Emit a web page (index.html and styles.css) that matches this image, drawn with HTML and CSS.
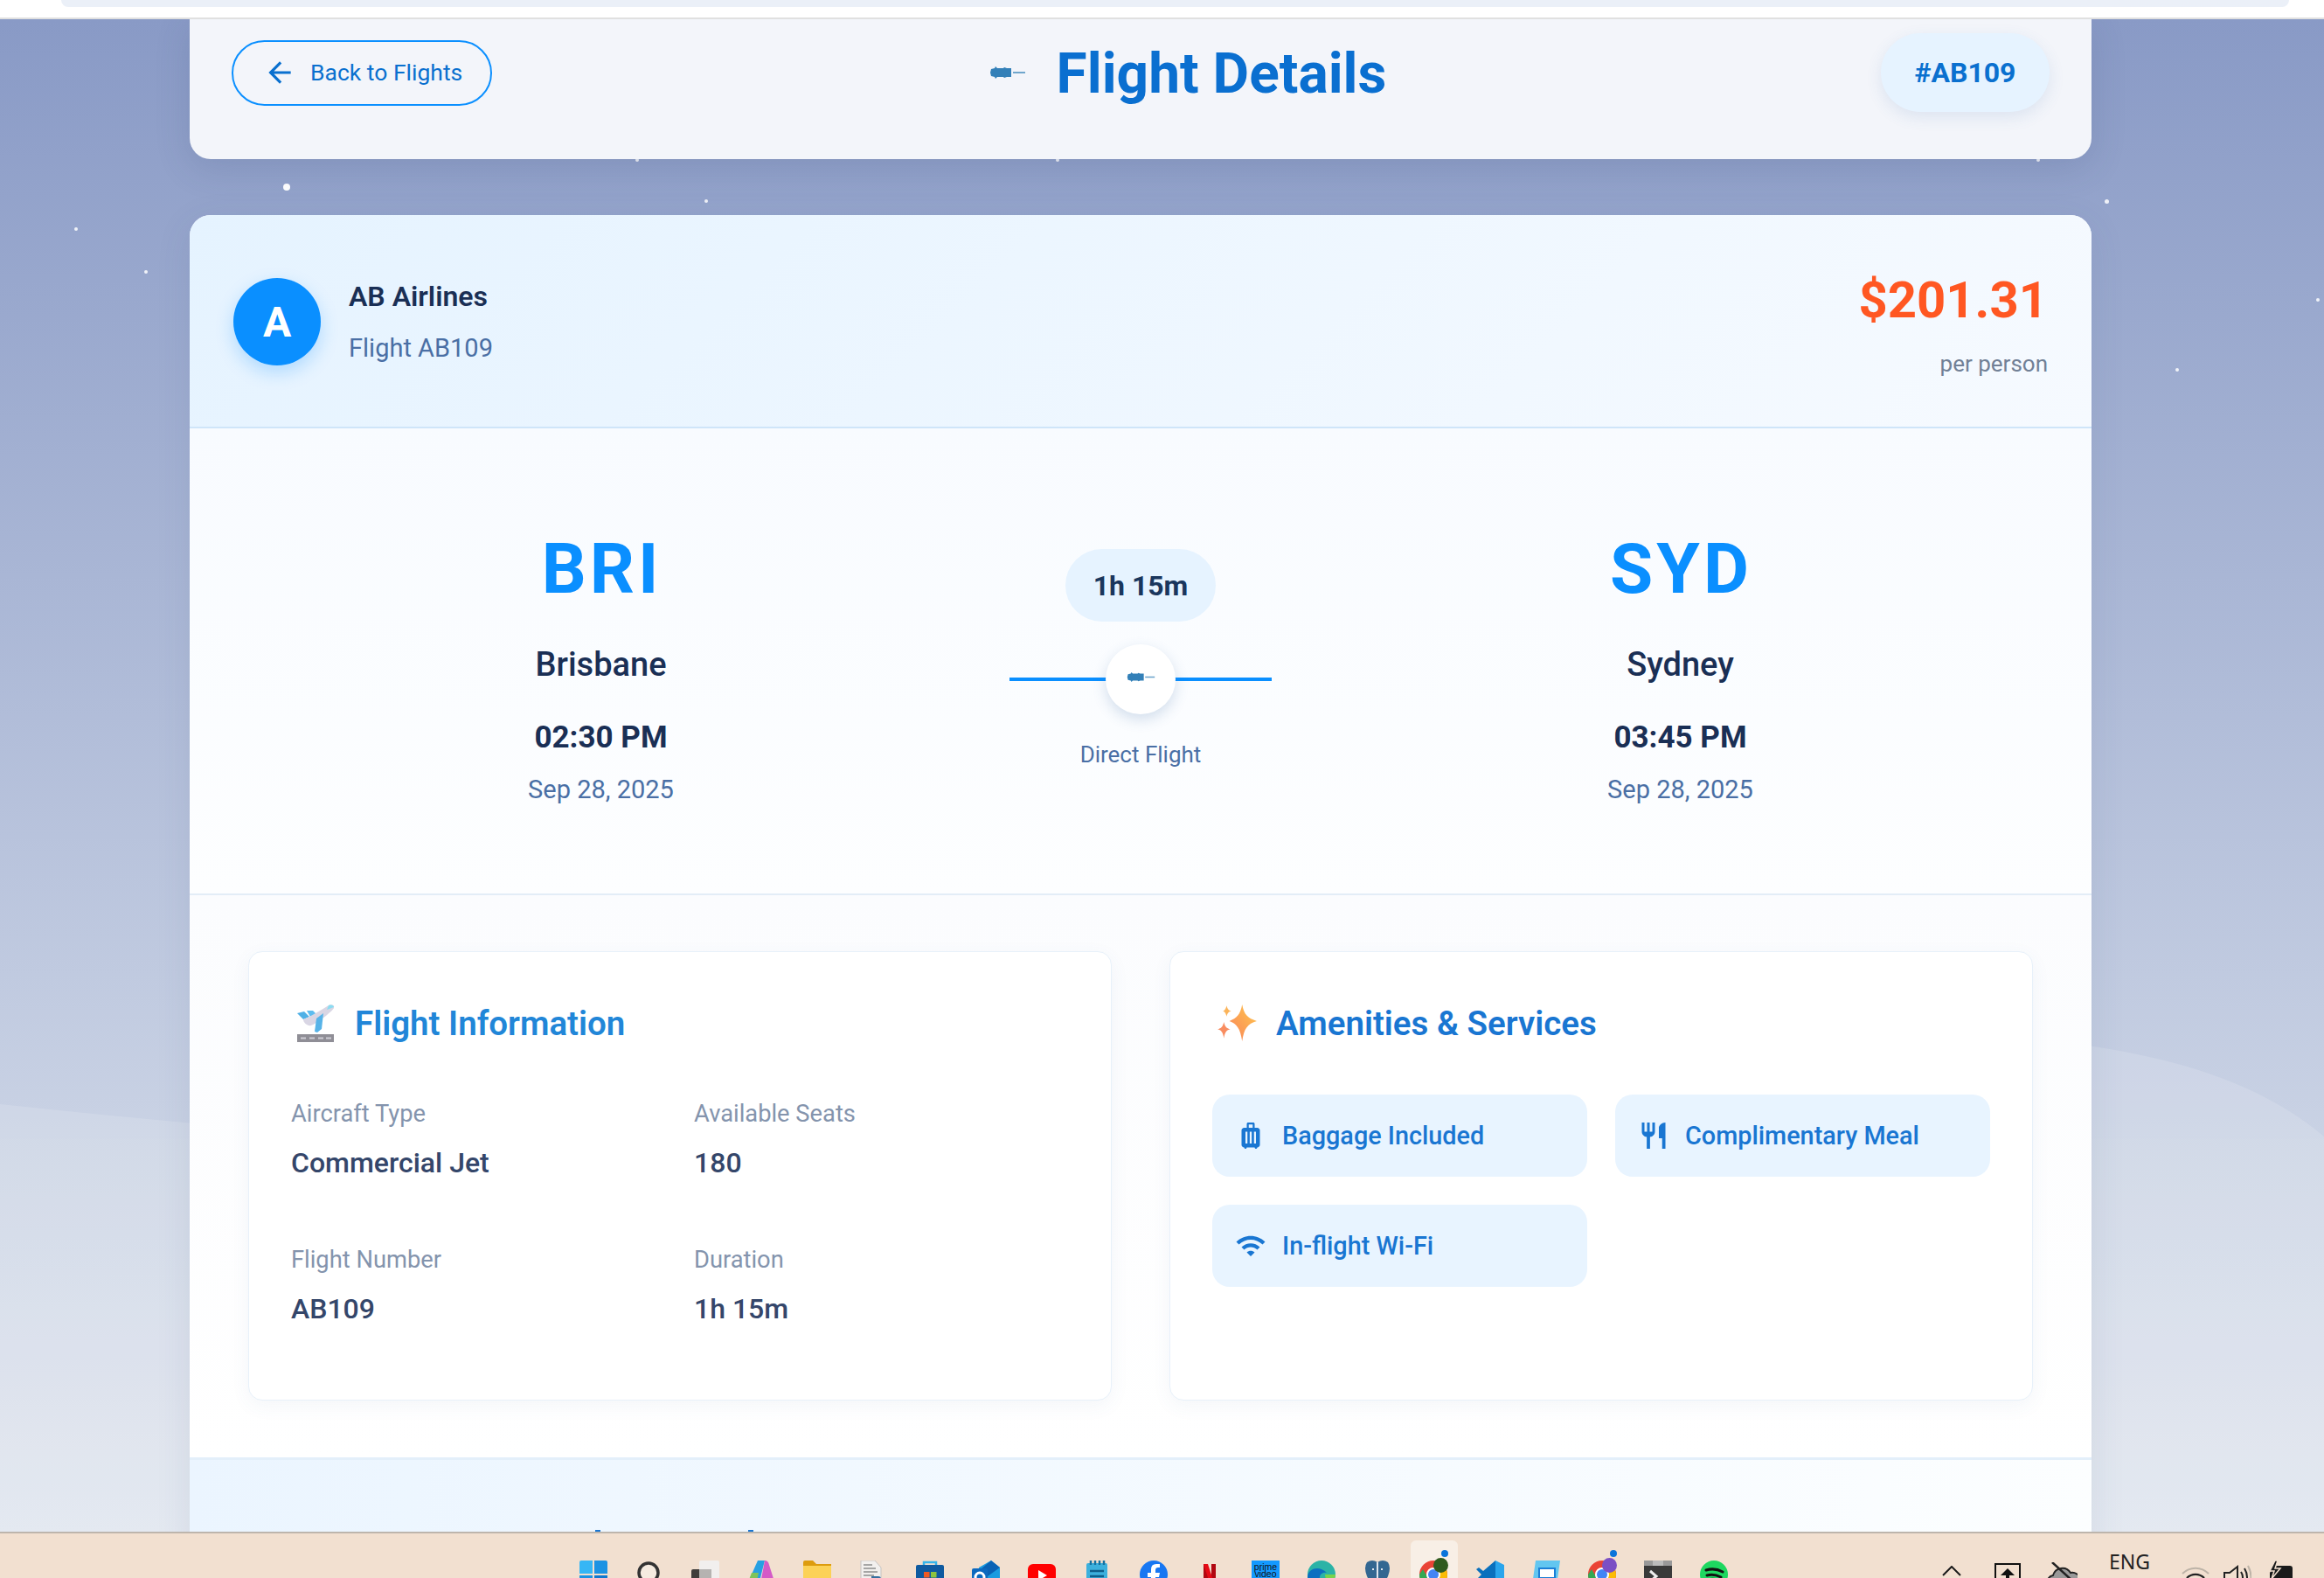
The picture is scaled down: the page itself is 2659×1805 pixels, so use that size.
FILE: index.html
```html
<!DOCTYPE html>
<html lang="en">
<head>
<meta charset="utf-8">
<title>Flight Details</title>
<link rel="stylesheet" href="styles.css">
</head>
<body>
<div class="browser-bar"><div class="browser-pill"></div></div>
<main class="page">
  <svg class="waves" viewBox="0 0 2659 1805" preserveAspectRatio="none" aria-hidden="true">
    <path class="wave-a" d="M0 1263C300 1295 600 1320 1000 1310C1500 1290 1900 1140 2300 1185C2450 1200 2570 1225 2659 1300V1805H0Z"/>
    <rect class="wave-b" x="0" y="1303" width="2659" height="502"/>
  </svg>
  <span class="star star-1"></span><span class="star star-2"></span><span class="star star-3"></span><span class="star star-4"></span><span class="star star-5"></span><span class="star star-6"></span><span class="star star-7"></span>
  <span class="star star-8"></span><span class="star star-9"></span><span class="star star-10"></span>

  <div class="column">
    <header class="top-card">
      <a class="back-btn" href="#">
        <svg class="back-icon" viewBox="0 0 24 24"><path d="M20 11H7.83l5.59-5.59L12 4l-8 8 8 8 1.41-1.41L7.83 13H20v-2z"/></svg>
        <span class="back-label">Back to Flights</span>
      </a>
      <div class="title-group">
        <svg class="mini-plane" viewBox="0 0 40 14"><path d="M0 7 1 3 5 2 6 0 8 2h7l1-1 3 1h5v10h-5l-3 1-1-1H8l-2 2-1-2-4-1Z"/><rect class="mini-tail" x="26" y="6" width="14" height="2"/></svg>
        <h1 class="page-title">Flight Details</h1>
      </div>
      <div class="code-badge">#AB109</div>
    </header>

    <section class="main-card">
      <div class="airline-row">
        <div class="airline">
          <div class="avatar">A</div>
          <div class="airline-text">
            <div class="airline-name">AB Airlines</div>
            <div class="airline-flight">Flight AB109</div>
          </div>
        </div>
        <div class="price-box">
          <div class="price">$201.31</div>
          <div class="per-person">per person</div>
        </div>
      </div>

      <div class="route">
        <div class="stop">
          <div class="stop-code">BRI</div>
          <div class="stop-city">Brisbane</div>
          <div class="stop-time">02:30 PM</div>
          <div class="stop-date">Sep 28, 2025</div>
        </div>
        <div class="route-mid">
          <div class="duration-pill">1h 15m</div>
          <div class="route-line">
            <div class="route-dot">
              <svg class="mini-plane mini-plane-small" viewBox="0 0 40 14"><path d="M0 7 1 3 5 2 6 0 8 2h7l1-1 3 1h5v10h-5l-3 1-1-1H8l-2 2-1-2-4-1Z"/><rect class="mini-tail" x="26" y="6" width="14" height="2"/></svg>
            </div>
          </div>
          <div class="route-note">Direct Flight</div>
        </div>
        <div class="stop">
          <div class="stop-code">SYD</div>
          <div class="stop-city">Sydney</div>
          <div class="stop-time">03:45 PM</div>
          <div class="stop-date">Sep 28, 2025</div>
        </div>
      </div>

      <div class="info">
        <article class="panel">
          <h2 class="panel-title panel-title-light">
            <svg class="emoji emoji-plane" viewBox="0 0 44 44">
              <rect x="0" y="35" width="42" height="9" fill="#8f8e96"/>
              <path d="M4 39.5h6M14 39.5h6M24 39.5h6M33 39.5h6" stroke="#cfcdd6" stroke-width="2"/>
              <path d="M0 11l8-2 6 6-7 3z" fill="#4fb0e6"/>
              <path d="M11 8l7 0 5 5-8 2z" fill="#5dbcef"/>
              <path d="M7 18C15 15 28 7 36 2c4-2 7 0 6 3-1 3-18 17-26 20-4 1-9-3-9-7z" fill="#d9d6e4"/>
              <path d="M36 2c3-1 6 0 6 2l-8 3z" fill="#8bdcf2"/>
              <path d="M22 17l8-6-2 18-5 4-3-1z" fill="#57b3e8"/>
            </svg>
            <span>Flight Information</span>
          </h2>
          <div class="facts">
            <div class="fact"><div class="fact-label">Aircraft Type</div><div class="fact-value">Commercial Jet</div></div>
            <div class="fact"><div class="fact-label">Available Seats</div><div class="fact-value">180</div></div>
            <div class="fact"><div class="fact-label">Flight Number</div><div class="fact-value">AB109</div></div>
            <div class="fact"><div class="fact-label">Duration</div><div class="fact-value">1h 15m</div></div>
          </div>
        </article>

        <article class="panel">
          <h2 class="panel-title">
            <svg class="emoji emoji-spark" viewBox="0 0 44 44">
              <defs><linearGradient id="spark" x1="1" y1="0" x2="0" y2="1"><stop offset="0" stop-color="#ffc84d"/><stop offset="1" stop-color="#f9825a"/></linearGradient></defs>
              <path d="M27 2c2 11 6 15 16 18-10 3-14 8-16 22-2-14-6-19-14-22 8-3 12-7 14-18z" fill="url(#spark)"/>
              <path d="M10 3c1 4 2 5 5 6-3 1-4 2-5 6-1-4-2-5-4-6 2-1 3-2 4-6z" fill="#fbb45a"/>
              <path d="M7 21c1 5 3 7 7 8-4 1-6 3-7 10-1-7-3-9-7-10 4-1 6-3 7-8z" fill="#f98d60"/>
            </svg>
            <span>Amenities &amp; Services</span>
          </h2>
          <div class="amenities">
            <div class="amenity">
              <svg class="amenity-icon" viewBox="0 0 24 24"><path d="M17 6h-2V3c0-.55-.45-1-1-1h-4c-.55 0-1 .45-1 1v3H7c-1.1 0-2 .9-2 2v11c0 1.1.9 2 2 2 0 .55.45 1 1 1s1-.45 1-1h6c0 .55.45 1 1 1s1-.45 1-1c1.1 0 2-.9 2-2V8c0-1.1-.9-2-2-2zM9.5 18H8V9h1.5v9zm3.25 0h-1.5V9h1.5v9zm.75-12h-3V3.5h3V6zM16 18h-1.5V9H16v9z"/></svg>
              <span>Baggage Included</span>
            </div>
            <div class="amenity">
              <svg class="amenity-icon" viewBox="0 0 24 24"><path d="M11 9H9V2H7v7H5V2H3v7c0 2.12 1.66 3.84 3.75 3.97V22h2.5v-9.03C11.34 12.84 13 11.12 13 9V2h-2v7zm5-3v8h2.5v8H21V2c-2.76 0-5 2.24-5 4z"/></svg>
              <span>Complimentary Meal</span>
            </div>
            <div class="amenity">
              <svg class="amenity-icon" viewBox="0 0 24 24"><path d="M1 9l2 2c4.97-4.97 13.03-4.97 18 0l2-2C16.93 2.93 7.08 2.93 1 9zm8 8l3 3 3-3c-1.65-1.66-4.34-1.66-6 0zm-4-4l2 2c2.76-2.76 7.24-2.76 10 0l2-2C15.14 9.14 8.87 9.14 5 13z"/></svg>
              <span>In-flight Wi-Fi</span>
            </div>
          </div>
        </article>
      </div>

      <div class="next-section"><i class="next-tip next-tip-a"></i><i class="next-tip next-tip-b"></i></div>
    </section>
  </div>
</main>

<footer class="taskbar">
  <div class="task-apps">
    <div class="task-slot"><svg viewBox="0 0 32 32"><path fill="#36b6f5" d="M0 2q0-2 2-2h13v15H0z"/><path fill="#1c93e3" d="M17 0h13q2 0 2 2v13H17z"/><path fill="#1c93e3" d="M0 17h15v15H2q-2 0-2-2z"/><path fill="#0f78cf" d="M17 17h15v13q0 2-2 2H17z"/></svg></div>
    <div class="task-slot"><svg viewBox="0 0 32 32"><circle cx="15" cy="14" r="11" fill="#f5ebe0" stroke="#333" stroke-width="3.5"/><path d="M23 22l7 8" stroke="#333" stroke-width="4"/></svg></div>
    <div class="task-slot"><svg viewBox="0 0 32 32"><rect x="9" y="0" width="23" height="32" rx="2" fill="#f1efee"/><rect x="0" y="10" width="23" height="22" rx="2" fill="#3f3d3b"/><rect x="9" y="10" width="14" height="22" fill="#b5b3b1"/></svg></div>
    <div class="task-slot"><svg viewBox="0 0 32 32"><path fill="#27a0e2" d="M12 0h8l-8 32H2q-3-1-2-5z"/><path fill="#7ec45a" d="M5 14h8l-4 18H2q-3-1-2-5z"/><path fill="#d45bc7" d="M20 0q4 0 5 5l7 22q1 5-3 5H14z"/><path fill="#f1a33c" d="M9 26h9l-2 6H7z"/></svg></div>
    <div class="task-slot"><svg viewBox="0 0 32 32"><path fill="#dd9c0e" d="M0 2q0-2 2-2h9l4 4h17v6H0z"/><path fill="#fcd257" d="M0 6h32v24q0 2-2 2H2q-2 0-2-2z"/></svg></div>
    <div class="task-slot"><svg viewBox="0 0 32 32"><path fill="#f2f0ee" stroke="#c5c3c1" d="M1 0h16l7 8v24H1z"/><path d="M4 5h10M4 9h14M4 13h16M4 17h12" stroke="#8d8d8d" stroke-width="1.5"/><path fill="#356f9f" d="M13 18h8q3 0 3 3v3h-8v8h-3z"/><path fill="#fdd23c" d="M25 22h5v10H17v-4h8z"/></svg></div>
    <div class="task-slot"><svg viewBox="0 0 32 32"><path d="M9 6V2h14v4" fill="none" stroke="#34b4ea" stroke-width="2.5"/><rect y="5" width="32" height="27" rx="2" fill="#0e5aa0"/><rect x="9" y="13" width="6.5" height="6.5" fill="#ef5a24"/><rect x="17" y="13" width="6.5" height="6.5" fill="#8cc43f"/><rect x="9" y="21" width="6.5" height="6.5" fill="#2ea6e8"/><rect x="17" y="21" width="6.5" height="6.5" fill="#fdb913"/></svg></div>
    <div class="task-slot"><svg viewBox="0 0 32 32"><path fill="#1a9be0" d="M8 8 22 0l10 8v24H8z"/><path fill="#0a62b5" d="M22 0l10 8-14 10-8-8z"/><rect y="9" width="18" height="20" rx="2" fill="#0d69bf"/><circle cx="9" cy="19" r="5" fill="none" stroke="#fff" stroke-width="3"/></svg></div>
    <div class="task-slot"><svg viewBox="0 0 32 32"><rect y="4" width="32" height="28" rx="6" fill="#f00"/><path d="M12 11l10 6-10 6z" fill="#fff"/></svg></div>
    <div class="task-slot"><svg viewBox="0 0 32 32"><rect x="3" y="3" width="24" height="29" rx="2" fill="#3cb0dd"/><path d="M8 0v5M13 0v5M18 0v5M23 0v5" stroke="#1570a0" stroke-width="2.5"/><path d="M7 12h16M7 18h16M7 24h16" stroke="#0e5e8a" stroke-width="2.5"/></svg></div>
    <div class="task-slot"><svg viewBox="0 0 32 32"><circle cx="16" cy="16" r="16" fill="#1877f2"/><path fill="#fff" d="M18 32V19h4l1-5h-5v-3q0-3 3-3h2V4h-4q-6 0-6 6v4H9v5h4v13z"/></svg></div>
    <div class="task-slot"><svg viewBox="0 0 32 32"><path fill="#b20710" d="M9 4h5v28H9zM18 4h5v28h-5z"/><path fill="#e50914" d="M9 4h5l9 28h-5z"/></svg></div>
    <div class="task-slot"><svg viewBox="0 0 32 32"><rect width="32" height="32" fill="#1399ff"/><text class="prime-text" x="16" y="10.5">prime</text><text class="prime-text" x="16" y="19">video</text></svg></div>
    <div class="task-slot"><svg viewBox="0 0 32 32"><circle cx="16" cy="16" r="16" fill="#2bb3a6"/><path fill="#0c6fc0" d="M0 18C2 8 14 6 22 14c-5-1-9 2-8 8 1 5 5 9 10 9-12 3-24-2-24-13z"/><path fill="#77d44d" d="M26 26q6-6 6-10H20q0 6 6 10z"/></svg></div>
    <div class="task-slot"><svg viewBox="0 0 32 32"><path fill="#336791" d="M4 2q6-4 12 0 6-4 12 0 4 6 0 16l-3 6-5 2v6h-8v-6l-5-2-3-6Q0 8 4 2z"/><path d="M16 2v18M10 10h2M20 10h2" stroke="#dfe6ee" stroke-width="2"/></svg></div>
    <div class="task-slot task-slot-active"><svg class="chrome" viewBox="0 0 32 32"><circle cx="16" cy="16" r="16" fill="#ea4335"/><path fill="#34a853" d="M0 16a16 16 0 0 0 15 16l7-12-12 0-6-10z"/><path fill="#fbbc05" d="M32 16A16 16 0 0 1 15 32l7-12V10h9z"/><circle cx="16" cy="16" r="7" fill="#4285f4" stroke="#fff" stroke-width="2"/></svg><i class="chrome-badge chrome-badge-n"></i><i class="chrome-dot"></i></div>
    <div class="task-slot"><svg viewBox="0 0 32 32"><path fill="#2aa5ec" d="M22 0l10 5v22l-10 5z"/><path fill="#0a70bd" d="M22 0v32L8 20l-5 4-3-2 6-6-6-6 3-2 5 4z"/></svg></div>
    <div class="task-slot"><svg viewBox="0 0 32 32"><path fill="#62c6f0" d="M4 0h28l-4 28H0z"/><rect x="8" y="9" width="18" height="11" fill="#fff" stroke="#1b7fd6" stroke-width="2"/></svg></div>
    <div class="task-slot"><svg class="chrome" viewBox="0 0 32 32"><circle cx="16" cy="16" r="16" fill="#ea4335"/><path fill="#34a853" d="M0 16a16 16 0 0 0 15 16l7-12-12 0-6-10z"/><path fill="#fbbc05" d="M32 16A16 16 0 0 1 15 32l7-12V10h9z"/><circle cx="16" cy="16" r="7" fill="#4285f4" stroke="#fff" stroke-width="2"/></svg><i class="chrome-badge chrome-badge-t"></i><i class="chrome-dot"></i></div>
    <div class="task-slot"><svg viewBox="0 0 32 32"><rect width="32" height="32" rx="2" fill="#3a3a3a"/><rect width="32" height="6" fill="#999"/><rect x="10" width="12" height="6" fill="#bbb"/><path d="M7 12l7 6-7 6" fill="none" stroke="#eee" stroke-width="3"/></svg></div>
    <div class="task-slot"><svg viewBox="0 0 32 32"><circle cx="16" cy="16" r="16" fill="#1ed760"/><path d="M7 11q10-3 19 2M8 17q8-2 16 2M9 22q7-2 13 1" fill="none" stroke="#111" stroke-width="3" stroke-linecap="round"/></svg></div>
  </div>
  <div class="tray">
    <svg class="tray-icon tray-chevron" viewBox="0 0 22 12"><path d="M1 11 11 1l10 10" fill="none" stroke="#1a1a1a" stroke-width="2"/></svg>
    <svg class="tray-icon tray-box" viewBox="0 0 30 30"><rect x="1" y="1" width="28" height="28" fill="none" stroke="#111" stroke-width="2"/><path d="M15 6l8 8h-6v10h-4V14H7z" fill="#111"/></svg>
    <svg class="tray-icon tray-cloud" viewBox="0 0 34 30"><path d="M4 30a8 8 0 0 1 2-15 11 11 0 0 1 20-3 8 8 0 0 1 4 18z" fill="#999" stroke="#222" stroke-width="2"/><path d="M5 0l24 22" stroke="#222" stroke-width="2.5"/></svg>
    <div class="tray-lang">ENG</div>
    <svg class="tray-icon tray-wifi" viewBox="0 0 32 30"><path d="M1 11a21 21 0 0 1 30 0" fill="none" stroke="#bdb3a7" stroke-width="2"/><path d="M6 16a14 14 0 0 1 20 0M11 21a7 7 0 0 1 10 0" fill="none" stroke="#222" stroke-width="2.2"/></svg>
    <svg class="tray-icon tray-sound" viewBox="0 0 32 30"><path d="M1 10h6l9-7v24l-9-7H1z" fill="none" stroke="#222" stroke-width="2"/><path d="M20 9q4 6 0 12M24 5q6 10 0 20" fill="none" stroke="#222" stroke-width="2"/><path d="M28 2q7 13 0 26" fill="none" stroke="#bdb3a7" stroke-width="2"/></svg>
    <svg class="tray-icon tray-battery" viewBox="0 0 32 30"><path d="M9 6h18a3 3 0 0 1 3 3v21H4V14z" fill="#1a1a1a"/><path d="M10 0 4 12h5l-3 9 10-12h-6l3-9z" fill="#1a1a1a" stroke="#f2e0d0" stroke-width="1.5"/></svg>
  </div>
</footer>
</body>
</html>
```

FILE: styles.css
```css
* { box-sizing: border-box; }

html, body {
  margin: 0;
  height: 100%;
  overflow: hidden;
}

body {
  display: flex;
  flex-direction: column;
  font-family: Roboto, "Liberation Sans", sans-serif;
  color: #1a365d;
  background: #dfe6ef;
}

/* browser chrome strip */
.browser-bar {
  flex: 0 0 22px;
  background: #fff;
  border-bottom: 2px solid #e0e0e0;
  padding: 0 40px 0 70px;
  position: relative;
  z-index: 3;
}

.browser-pill {
  height: 8px;
  background: #ebf0f8;
  border-radius: 0 0 10px 10px;
}

/* page */
.page {
  flex: 1 1 auto;
  min-height: 0;
  position: relative;
  overflow: hidden;
  background: linear-gradient(180deg, #899ac6 0%, #e0e6ef 100%);
}

.waves {
  position: absolute;
  left: 0;
  top: -22px;
  width: 2659px;
  height: 1805px;
}

.wave-a { fill: rgba(255, 255, 255, 0.14); }
.wave-b { fill: rgba(255, 255, 255, 0.03); }

.star {
  position: absolute;
  border-radius: 50%;
  background: rgba(255, 255, 255, 0.85);
  width: 4px;
  height: 4px;
}

.star-1 { left: 324px; top: 188px; width: 8px; height: 8px; background: #fff; }
.star-2 { left: 806px; top: 206px; }
.star-3 { left: 85px; top: 238px; }
.star-4 { left: 165px; top: 287px; }
.star-5 { left: 2408px; top: 206px; width: 5px; height: 5px; }
.star-6 { left: 2650px; top: 319px; }
.star-7 { left: 2489px; top: 399px; }
.star-8 { left: 727px; top: 159px; }
.star-9 { left: 1208px; top: 159px; }
.star-10 { left: 2330px; top: 159px; }

.column {
  position: relative;
  width: 2176px;
  margin-left: 217px;
  display: flex;
  flex-direction: column;
  gap: 64px;
}

/* header card */
.top-card {
  display: flex;
  align-items: center;
  justify-content: space-between;
  padding: 16px 48px 54px;
  background: #f3f5fa;
  border-radius: 0 0 24px 24px;
  box-shadow: 0 10px 40px rgba(50, 70, 110, 0.16);
}

.back-btn {
  display: flex;
  align-items: center;
  gap: 16px;
  width: 298px;
  height: 75px;
  padding-left: 34px;
  border: 2px solid #0a8fff;
  border-radius: 38px;
  color: #0a70cf;
  font-size: 26.5px;
  text-decoration: none;
}

.back-label { padding-bottom: 2px; }

.back-icon {
  width: 38px;
  height: 38px;
  fill: #0a70cf;
}

.title-group {
  display: flex;
  align-items: center;
  gap: 36px;
  margin-left: 4px;
}

.mini-plane {
  width: 40px;
  height: 14px;
  fill: #3380b8;
}

.mini-tail { fill: #6fa6cc; }

.mini-plane-small {
  width: 33px;
  height: 11px;
  margin-top: -6px;
}

.page-title {
  margin: 0;
  padding-top: 4px;
  font-size: 64px;
  font-weight: 700;
  line-height: 86px;
  color: #0a6fd0;
}

.code-badge {
  width: 193px;
  height: 90px;
  display: flex;
  align-items: center;
  justify-content: center;
  background: #e6f3ff;
  border-radius: 45px;
  color: #0a70cf;
  font-size: 32px;
  font-weight: 700;
  box-shadow: 0 6px 18px rgba(60, 110, 170, 0.12);
}

/* main card */
.main-card {
  display: flex;
  flex-direction: column;
  border-radius: 24px 24px 0 0;
  overflow: hidden;
  background: #fff;
  box-shadow: 0 10px 40px rgba(60, 80, 120, 0.1);
}

.airline-row {
  height: 244px;
  display: flex;
  align-items: center;
  justify-content: space-between;
  padding: 2px 50px 0 50px;
  background: linear-gradient(135deg, #e5f3ff 0%, #f6faff 100%);
  border-bottom: 2px solid #cfe5f9;
}

.airline {
  display: flex;
  align-items: center;
  gap: 32px;
}

.avatar {
  width: 100px;
  height: 100px;
  border-radius: 50%;
  background: #0a8fff;
  color: #fff;
  display: flex;
  align-items: center;
  justify-content: center;
  font-size: 48px;
  font-weight: 700;
  box-shadow: 0 8px 20px rgba(10, 143, 255, 0.25);
}

.airline-text {
  display: flex;
  flex-direction: column;
  gap: 17px;
}

.airline-name {
  font-size: 32px;
  font-weight: 600;
  line-height: 42px;
  color: #1a2f55;
}

.airline-flight {
  font-size: 29px;
  line-height: 42px;
  color: #4a6fa5;
}

.price-box {
  text-align: right;
  display: flex;
  flex-direction: column;
  gap: 21px;
  padding-top: 5px;
}

.price {
  font-size: 58px;
  font-weight: 700;
  line-height: 70px;
  color: #ff5722;
}

.per-person {
  font-size: 26px;
  line-height: 34px;
  color: #718096;
}

/* route */
.route {
  display: grid;
  grid-template-columns: 1fr 300px 1fr;
  padding: 114px 3px 99px;
  background: linear-gradient(180deg, #f8fbff 0%, #fdfeff 100%);
  border-bottom: 2px solid #e3edf7;
}

.stop {
  display: flex;
  flex-direction: column;
  align-items: center;
}

.stop-code {
  padding-left: 2px;
  font-size: 80px;
  font-weight: 700;
  letter-spacing: 4px;
  line-height: 94px;
  color: #0a8fff;
}

.stop-city {
  margin-top: 38px;
  font-size: 38px;
  font-weight: 500;
  line-height: 48px;
  color: #1a2f55;
}

.stop-time {
  margin-top: 37px;
  font-size: 35px;
  font-weight: 700;
  line-height: 46px;
  color: #1a2f55;
}

.stop-date {
  margin-top: 16px;
  font-size: 29px;
  line-height: 40px;
  color: #4a6fa5;
}

.route-mid {
  display: flex;
  flex-direction: column;
  align-items: center;
  padding-top: 24px;
}

.duration-pill {
  width: 172px;
  height: 83px;
  border-radius: 42px;
  background: #e6f3ff;
  display: flex;
  align-items: center;
  justify-content: center;
  font-size: 32px;
  font-weight: 700;
  color: #1a365d;
}

.route-line {
  width: 300px;
  height: 80px;
  margin-top: 26px;
  display: flex;
  align-items: center;
  justify-content: center;
  background: linear-gradient(#0a8fff, #0a8fff) center / 100% 4px no-repeat;
}

.route-dot {
  width: 80px;
  height: 80px;
  border-radius: 50%;
  background: #fff;
  display: flex;
  align-items: center;
  justify-content: center;
  box-shadow: 0 6px 16px rgba(50, 100, 160, 0.2);
}

.route-note {
  margin-top: 28px;
  font-size: 26px;
  line-height: 36px;
  color: #4a6fa5;
}

/* info */
.info {
  display: grid;
  grid-template-columns: 1fr 1fr;
  gap: 66px;
  padding: 64px 67px 65px;
  background: linear-gradient(180deg, #fbfcfe 0%, #ffffff 100%);
  border-bottom: 3px solid #e3effa;
}

.panel {
  height: 514px;
  padding: 59px 48px 0;
  background: #fff;
  border: 1px solid #e8f1fa;
  border-radius: 16px;
  box-shadow: 0 6px 22px rgba(70, 110, 160, 0.06);
}

.panel-title {
  display: flex;
  align-items: center;
  gap: 24px;
  margin: 0;
  height: 44px;
  font-size: 38.5px;
  font-weight: 600;
  color: #1976d2;
}

.panel-title-light { color: #2186d8; }

.emoji {
  width: 44px;
  height: 44px;
  flex: none;
}

.emoji-plane {
  margin-left: 7px;
  margin-right: -2px;
}

.emoji-spark {
  width: 46px;
  height: 46px;
  margin-left: 6px;
  margin-right: -3px;
}

.facts {
  display: grid;
  grid-template-columns: 1fr 1fr;
  column-gap: 32px;
  row-gap: 73px;
  margin-top: 64px;
}

.fact-label {
  font-size: 27.3px;
  line-height: 36px;
  color: #8494ad;
}

.fact-value {
  margin-top: 18px;
  font-size: 32px;
  font-weight: 500;
  line-height: 40px;
  color: #34466a;
}

.amenities {
  display: grid;
  grid-template-columns: 429px 429px;
  gap: 32px;
  margin-top: 60px;
}

.amenity {
  height: 94px;
  padding-left: 26px;
  display: flex;
  align-items: center;
  gap: 18px;
  border-radius: 20px;
  background: #e8f4ff;
  font-size: 28.8px;
  font-weight: 500;
  color: #1976d2;
}

.amenity-icon {
  width: 36px;
  height: 36px;
  fill: #1976d2;
  flex: none;
}

.next-section {
  position: relative;
  height: 200px;
  background: linear-gradient(90deg, #ebf5ff 0%, #fcfeff 100%);
}

.next-tip {
  position: absolute;
  top: 80px;
  width: 6px;
  height: 4px;
  background: #1976d2;
}

.next-tip-a { left: 464px; }
.next-tip-b { left: 639px; }

/* taskbar */
.taskbar {
  flex: 0 0 53px;
  position: relative;
  z-index: 3;
  display: flex;
  overflow: hidden;
  background: #f2e0d0;
  border-top: 2px solid #bdb5ac;
}

.task-apps {
  display: flex;
  align-items: flex-start;
  padding-left: 647px;
}

.task-slot {
  position: relative;
  width: 64.1px;
  height: 60px;
  padding-top: 31px;
  display: flex;
  justify-content: center;
  flex: none;
}

.task-slot svg {
  width: 32px;
  height: 32px;
  flex: none;
}

.task-slot-active::before {
  content: "";
  position: absolute;
  left: 6px;
  right: 5px;
  top: 8px;
  bottom: 0;
  background: #f8efe6;
  border-radius: 6px 6px 0 0;
}

.task-slot-active svg { position: relative; }

.prime-text {
  font-family: "Liberation Sans", sans-serif;
  font-size: 10.5px;
  text-anchor: middle;
  fill: #111;
}

.chrome-badge {
  position: absolute;
  left: 32px;
  top: 28px;
  width: 17px;
  height: 17px;
  border-radius: 50%;
}

.chrome-badge-n { background: #2f5a1e; }
.chrome-badge-t { background: #7b4fc4; }

.chrome-dot {
  position: absolute;
  left: 41px;
  top: 19px;
  width: 8px;
  height: 8px;
  border-radius: 50%;
  background: #0a74da;
}

.tray {
  margin-left: 229px;
  display: flex;
  align-items: flex-start;
  flex: none;
}

.tray-icon { flex: none; margin-top: 37px; }
.tray-chevron { width: 22px; height: 12px; }
.tray-box { width: 30px; height: 30px; margin-top: 34px; margin-left: 38px; }
.tray-cloud { width: 34px; height: 30px; margin-top: 33px; margin-left: 31px; }

.tray-lang {
  width: 46px;
  margin-left: 36px;
  margin-top: 17px;
  font-family: "Noto Sans", sans-serif;
  font-size: 23px;
  line-height: 30px;
  color: #222;
}

.tray-wifi { width: 32px; height: 30px; margin-top: 35px; margin-left: 37px; }
.tray-sound { width: 32px; height: 30px; margin-top: 35px; margin-left: 16px; }
.tray-battery { width: 32px; height: 30px; margin-top: 31px; margin-left: 17px; }
```
